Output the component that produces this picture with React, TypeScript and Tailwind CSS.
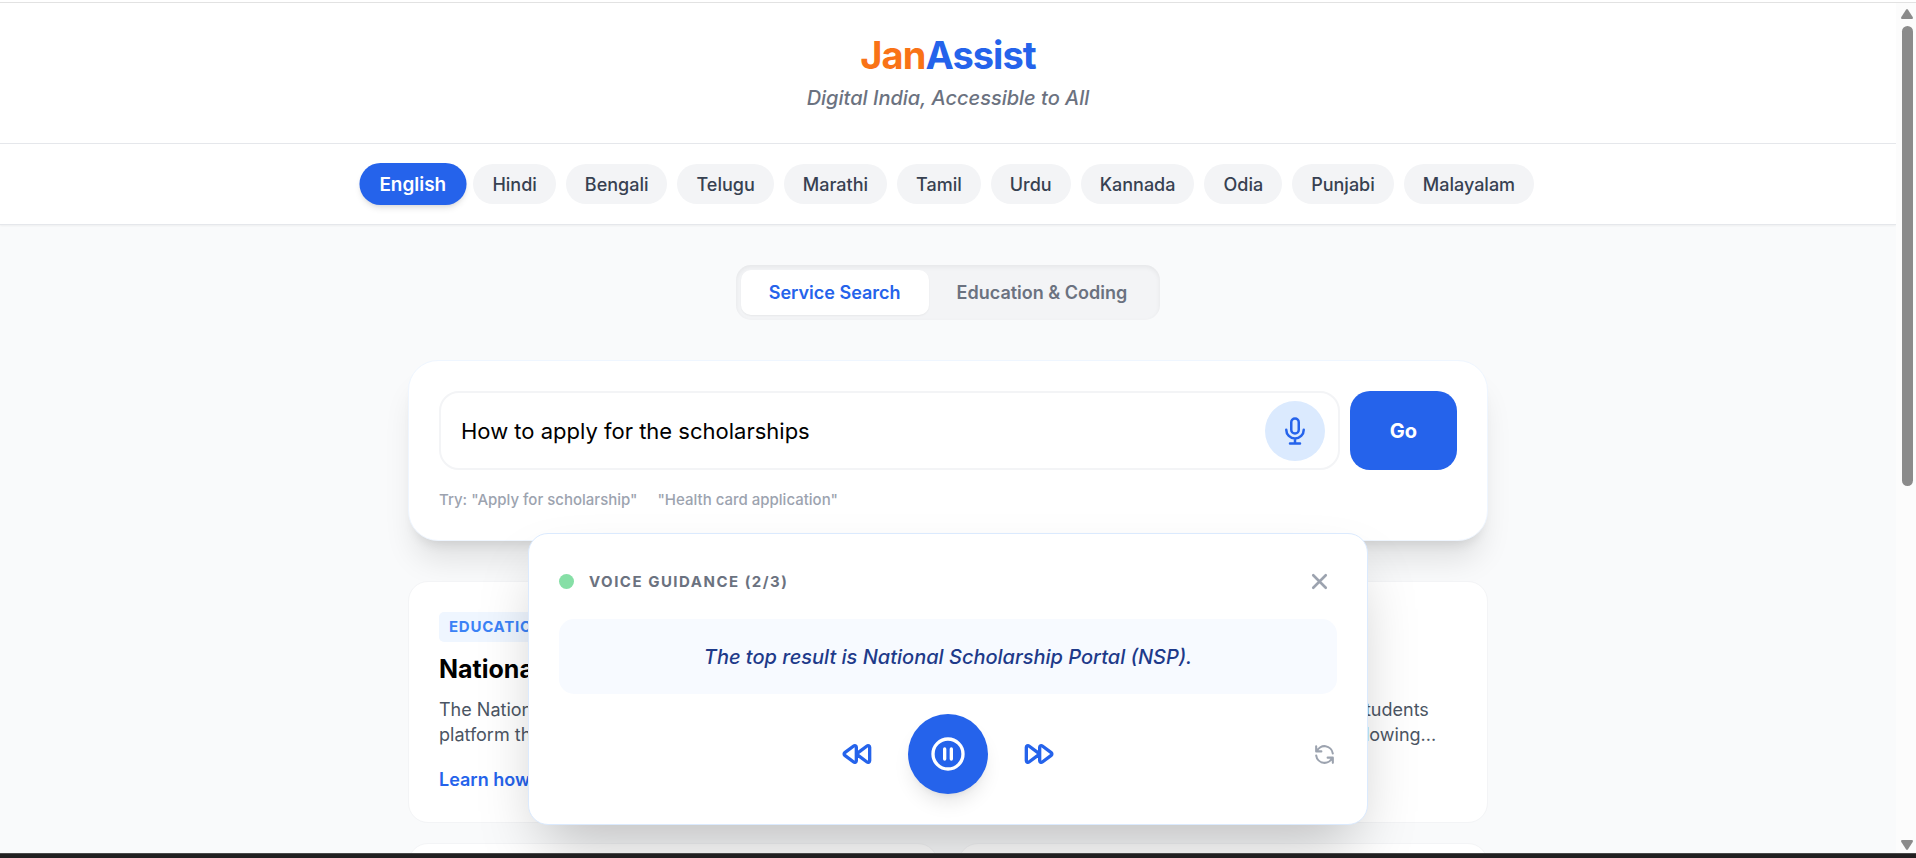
import { useState } from "react";
import type { ReactNode } from "react";
import clsx from "clsx";

const languages = [
  "English",
  "Hindi",
  "Bengali",
  "Telugu",
  "Marathi",
  "Tamil",
  "Urdu",
  "Kannada",
  "Odia",
  "Punjabi",
  "Malayalam",
];

const tabs = ["Service Search", "Education & Coding"];

const suggestions = ['"Apply for scholarship"', '"Health card application"'];

type IconProps = { className: string; strokeWidth?: number; children: ReactNode };

function Icon({ className, strokeWidth = 2, children }: IconProps) {
  return (
    <svg
      className={className}
      viewBox="0 0 24 24"
      fill="none"
      stroke="currentColor"
      strokeWidth={strokeWidth}
      strokeLinecap="round"
      strokeLinejoin="round"
      aria-hidden="true"
    >
      {children}
    </svg>
  );
}

function Header() {
  return (
    <header className="flex flex-col items-center gap-[5px] border-b border-gray-200 bg-white py-[30px]">
      <h1 className="text-[38px] leading-[45px] font-bold tracking-tight text-[#2563eb]">
        <span className="text-[#f97316]">Jan</span>Assist
      </h1>
      <p className="text-[20px] leading-[30px] font-medium text-[#6b7280] italic">
        Digital India, Accessible to All
      </p>
    </header>
  );
}

function LanguageBar() {
  const [language, setLanguage] = useState("English");

  return (
    <nav className="relative flex flex-wrap justify-center gap-[10px] border-b border-gray-200 bg-white py-5 shadow-xs">
      {languages.map((name) => (
        <button
          key={name}
          className={clsx(
            "h-10 rounded-full px-[19px] text-[18px] leading-[25px] transition-all",
            name === language
              ? "scale-105 bg-[#2563eb] font-semibold text-white shadow-md"
              : "bg-[#f3f4f6] font-medium text-[#374151] hover:bg-gray-200"
          )}
          onClick={() => setLanguage(name)}
        >
          {name}
        </button>
      ))}
    </nav>
  );
}

function TabSwitch() {
  const [tab, setTab] = useState(tabs[0]);

  return (
    <div className="flex rounded-[15px] bg-[#f3f4f6] p-[5px] shadow-[inset_0_2px_5px_0_rgba(0,0,0,0.06)]">
      {tabs.map((name) => (
        <button
          key={name}
          className={clsx(
            "rounded-[10px] px-7 py-[10px] text-[18px] leading-[25px] font-semibold",
            name === tab ? "bg-white text-[#2563eb] shadow-xs" : "text-[#6b7280]"
          )}
          onClick={() => setTab(name)}
        >
          {name}
        </button>
      ))}
    </div>
  );
}

function SearchCard() {
  const [query, setQuery] = useState("How to apply for the scholarships");

  return (
    <section className="rounded-[30px] border border-[#eff6ff] bg-white p-[30px] shadow-[0_25px_31px_-6px_rgba(0,0,0,0.1),0_10px_12px_-7px_rgba(0,0,0,0.1)]">
      <form className="flex gap-[10px]" onSubmit={(e) => e.preventDefault()}>
        <div className="relative flex-1">
          <input
            type="text"
            aria-label="Search services"
            className="h-[79px] w-full rounded-[20px] border-2 border-[#f3f4f6] bg-white pr-20 pl-5 text-[22px] text-black outline-none focus:border-blue-500"
            value={query}
            onChange={(e) => setQuery(e.target.value)}
          />
          <button
            type="button"
            aria-label="Speak"
            className="absolute top-[10px] right-[15px] flex size-[60px] items-center justify-center rounded-full bg-[#dbeafe] text-[#2563eb]"
          >
            <Icon className="size-[30px]">
              <path d="M19 11a7 7 0 01-7 7m0 0a7 7 0 01-7-7m7 7v4m0 0H8m4 0h4m-4-8a3 3 0 01-3-3V5a3 3 0 116 0v6a3 3 0 01-3 3z" />
            </Icon>
          </button>
        </div>
        <button
          type="submit"
          className="rounded-[20px] bg-[#2563eb] px-10 text-[20px] font-bold text-white hover:bg-blue-700"
        >
          Go
        </button>
      </form>
      <div className="mt-5 flex gap-5 text-[15px] leading-5 font-medium text-[#9ca3af]">
        {suggestions.map((text, i) => (
          <span key={text}>
            {i === 0 && "Try: "}
            {text}
          </span>
        ))}
      </div>
    </section>
  );
}

function Results() {
  return (
    <section className="grid grid-cols-2 gap-5">
      <article className="col-span-2 flex flex-col items-start rounded-[20px] border border-[#f3f4f6] bg-white p-[30px]">
        <span className="rounded-[5px] bg-[#eff6ff] px-[10px] py-[5px] text-[15px] leading-5 font-bold tracking-wider text-[#3b82f6] uppercase">
          Education
        </span>
        <h2 className="mt-[10px] text-[25px] leading-[35px] font-bold text-black">
          National Scholarship Portal (NSP)
        </h2>
        <p className="mt-[10px] line-clamp-2 text-[18px] leading-[25px] text-[#4b5563]">
          The National Scholarship Portal (NSP) is a Government of India initiative and a
          single online service built for students platform that brings together scholarship
          schemes of the centre and the state; to apply complete all of the following...
        </p>
        <a href="#" className="mt-5 text-[18px] leading-[25px] font-semibold text-[#2563eb]">
          Learn how to apply
        </a>
      </article>
      <article className="h-[242px] rounded-[20px] border border-[#f3f4f6] bg-white" />
      <article className="h-[242px] rounded-[20px] border border-[#f3f4f6] bg-white" />
    </section>
  );
}

function VoicePanel() {
  const [playing, setPlaying] = useState(true);

  return (
    <div className="w-full max-w-[840px] rounded-[20px] border border-[#dbeafe] bg-white p-[30px] shadow-[0_31px_62px_-15px_rgba(0,0,0,0.25)]">
      <div className="flex items-center justify-between">
        <div className="flex items-center gap-[15px]">
          <span className="size-[15px] rounded-full bg-[#86dfa6]" />
          <span className="text-[15px] leading-5 font-bold tracking-widest text-[#6b7280] uppercase">
            Voice Guidance (2/3)
          </span>
        </div>
        <button aria-label="Close" className="p-[5px] text-[#9ca3af] hover:text-gray-600">
          <Icon className="size-[25px]" strokeWidth={2.5}>
            <path d="M6 18L18 6M6 6l12 12" />
          </Icon>
        </button>
      </div>
      <div className="my-5 flex min-h-[75px] items-center justify-center rounded-[15px] bg-[#f7faff] px-5">
        <p className="text-center text-[20px] leading-[30px] font-medium text-[#1e3a8a] italic">
          The top result is National Scholarship Portal (NSP).
        </p>
      </div>
      <div className="grid grid-cols-[1fr_auto_1fr] items-center">
        <div className="col-start-2 flex items-center gap-[30px] text-[#2563eb]">
          <button aria-label="Previous">
            <Icon className="size-10">
              <path d="M12.066 11.2a1 1 0 000 1.6l5.334 4A1 1 0 0019 16V8a1 1 0 00-1.6-.8l-5.333 4zM4.066 11.2a1 1 0 000 1.6l5.334 4A1 1 0 0011 16V8a1 1 0 00-1.6-.8l-5.334 4z" />
            </Icon>
          </button>
          <button
            aria-label={playing ? "Pause" : "Play"}
            className="flex size-20 items-center justify-center rounded-full bg-[#2563eb] text-white shadow-[0_12px_19px_-4px_rgba(0,0,0,0.1),0_5px_7px_-5px_rgba(0,0,0,0.1)]"
            onClick={() => setPlaying(!playing)}
          >
            <Icon className="size-10">
              <path
                d={
                  playing
                    ? "M10 9v6m4-6v6m7-3a9 9 0 11-18 0 9 9 0 0118 0z"
                    : "M10 8l6 4-6 4V8zm11 4a9 9 0 11-18 0 9 9 0 0118 0z"
                }
              />
            </Icon>
          </button>
          <button aria-label="Next">
            <Icon className="size-10">
              <path d="M11.933 12.8a1 1 0 000-1.6L6.6 7.2A1 1 0 005 8v8a1 1 0 001.6.8l5.333-4zM19.933 12.8a1 1 0 000-1.6l-5.333-4A1 1 0 0013 8v8a1 1 0 001.6.8l5.333-4z" />
            </Icon>
          </button>
        </div>
        <button aria-label="Replay" className="justify-self-end text-[#9ca3af]">
          <Icon className="size-[25px]">
            <path d="M4 4v5h.582m15.356 2A8.001 8.001 0 004.582 9m0 0H9m11 11v-5h-.581m0 0a8.003 8.003 0 01-15.357-2m15.357 2H15" />
          </Icon>
        </button>
      </div>
    </div>
  );
}

function Scrollbar() {
  return (
    <div className="flex w-5 shrink-0 flex-col items-center justify-between bg-[#fcfcfc] pt-[6px] pb-[3px] pl-[2px] text-[#8b8b8b]">
      <svg className="w-3" viewBox="0 0 12 10" fill="currentColor" aria-hidden="true">
        <path d="M5 .8Q6-.6 7 .8L11.700 8Q12.400 10 11 10H1Q-.4 10 .3 8z" />
      </svg>
      <div className="mt-[7px] w-[11px] flex-[460] rounded-full bg-[#8b8b8b]" />
      <div className="flex-[354]" />
      <svg className="w-3" viewBox="0 0 12 10" fill="currentColor" aria-hidden="true">
        <path d="M5 9.200Q6 10.600 7 9.200L11.700 2Q12.400 0 11 0H1Q-.4 0 .3 2z" />
      </svg>
    </div>
  );
}

export default function App() {
  return (
    <div className="flex h-screen flex-col overflow-hidden bg-white pt-[2px] font-[Inter,sans-serif]">
      <div className="flex min-h-0 flex-1 border-t border-[#e2e2e2]">
        <div className="relative min-w-0 flex-1 overflow-hidden bg-[#f9fafb]">
          <Header />
          <LanguageBar />
          <main className="mx-auto flex max-w-[1120px] flex-col gap-10 px-5 py-10">
            <div className="flex justify-center">
              <TabSwitch />
            </div>
            <SearchCard />
            <Results />
          </main>
          <div className="absolute inset-x-0 bottom-7 flex justify-center px-5">
            <VoicePanel />
          </div>
        </div>
        <Scrollbar />
      </div>
      <div className="h-[5px] border-t border-[#4a4a4a] bg-[#211f20]" />
    </div>
  );
}
